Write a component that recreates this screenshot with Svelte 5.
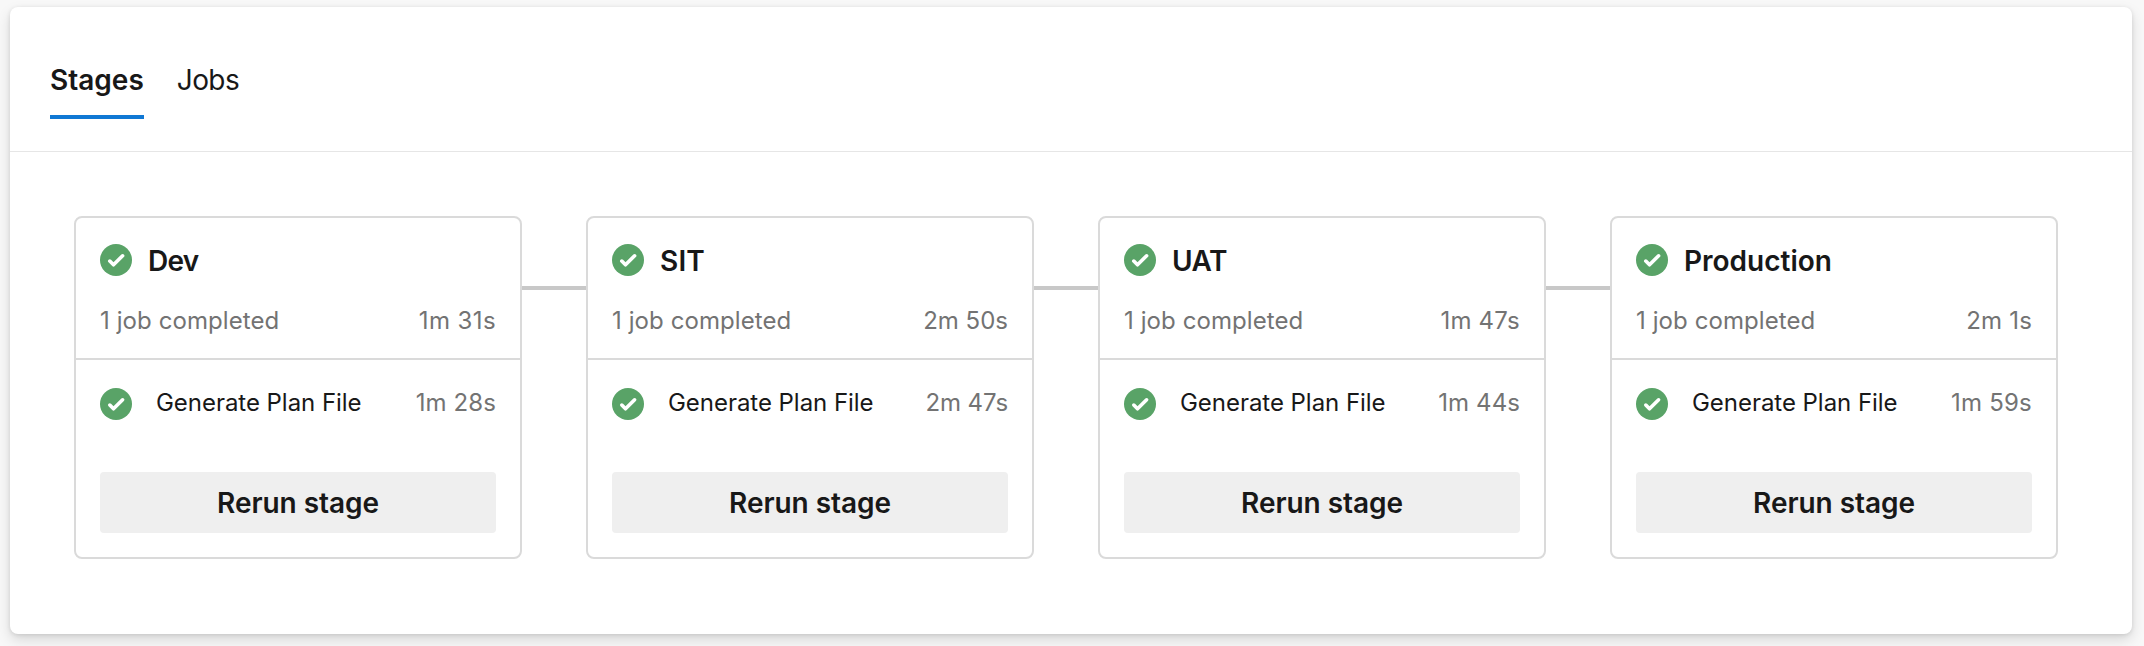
<script>
  const stages = [
    { name: 'Dev', total: '1m 31s', job: '1m 28s', nameTrack: -0.7, totalTrack: 0.4, jobTrack: 0.1 },
    { name: 'SIT', total: '2m 50s', job: '2m 47s', nameTrack: 0.2, totalTrack: 0, jobTrack: -0.1 },
    { name: 'UAT', total: '1m 47s', job: '1m 44s', nameTrack: -0.5, totalTrack: 0.2, jobTrack: 0.1 },
    { name: 'Production', total: '2m 1s', job: '1m 59s', nameTrack: 0, totalTrack: 0.2, jobTrack: 0.2 }
  ];
</script>

{#snippet check()}
  <svg class="check" viewBox="0 0 32 32" aria-hidden="true">
    <circle cx="16" cy="16" r="16" fill="#59a367" />
    <path d="M9.8 17.1 13.5 20.8 22.6 11.8" fill="none" stroke="#fff" stroke-width="3.6" stroke-linecap="round" stroke-linejoin="round" />
  </svg>
{/snippet}

<main class="page">
  <section class="panel">
    <nav class="tabs">
      <button class="tab active">Stages</button>
      <button class="tab">Jobs</button>
    </nav>
    <div class="stages">
      {#each stages as stage, i}
        {#if i > 0}<div class="connector"></div>{/if}
        <article class="card">
          <header>
            <div class="title">
              {@render check()}
              <h2 style="letter-spacing: {stage.nameTrack}px">{stage.name}</h2>
            </div>
            <div class="summary">
              <span class="count">1 job completed</span>
              <span style="letter-spacing: {stage.totalTrack}px">{stage.total}</span>
            </div>
          </header>
          <div class="job">
            {@render check()}
            <span class="job-name">Generate Plan File</span>
            <span class="time" style="letter-spacing: {stage.jobTrack}px">{stage.job}</span>
          </div>
          <button class="rerun">Rerun stage</button>
        </article>
      {/each}
    </div>
  </section>
</main>

<style>
  :global(body) {
    margin: 0;
    background: #f8f8f8;
  }
  .page {
    box-sizing: border-box;
    height: 646px;
    padding: 7px 12px 12px 10px;
    overflow: hidden;
    font-family: Inter, 'Liberation Sans', sans-serif;
    color: #181818;
  }
  .panel {
    box-sizing: border-box;
    height: 627px;
    border-radius: 8px;
    background: #fff;
    box-shadow: 0 6px 14px rgba(0, 0, 0, 0.13), 0 1px 4px rgba(0, 0, 0, 0.11);
  }
  button {
    border: 0;
    padding: 0;
    background: none;
    font: inherit;
    color: inherit;
  }
  .tabs {
    box-sizing: border-box;
    display: flex;
    align-items: flex-start;
    gap: 33px;
    height: 145px;
    padding: 42px 40px 0;
    border-bottom: 1px solid #e6e6e6;
  }
  .tab {
    box-sizing: border-box;
    height: 70px;
    padding-top: 2px;
    padding-bottom: 6px;
    border-bottom: 4px solid transparent;
    font-size: 28px;
    line-height: 58px;
    letter-spacing: -0.6px;
  }
  .tab.active {
    border-color: #1078d4;
    font-weight: 600;
    letter-spacing: 0;
  }
  .stages {
    display: flex;
    padding: 64px 64px 0;
  }
  .connector {
    width: 64px;
    height: 4px;
    margin-top: 70px;
    background: #c8c8c8;
  }
  .card {
    box-sizing: border-box;
    width: 448px;
    height: 343px;
    border: 2px solid #dadada;
    border-radius: 8px;
  }
  header {
    box-sizing: border-box;
    height: 142px;
    padding: 26px 24px 0;
    border-bottom: 2px solid #dadada;
  }
  .title {
    display: flex;
    align-items: flex-start;
    gap: 16px;
    height: 32px;
  }
  .check {
    display: block;
    flex: none;
    width: 32px;
    height: 32px;
  }
  h2 {
    margin: 1px 0 0;
    font-size: 28px;
    font-weight: 600;
    line-height: 32px;
  }
  .summary {
    display: flex;
    justify-content: space-between;
    margin-top: 29px;
    font-size: 24px;
    line-height: 31px;
    color: #737373;
  }
  .count {
    letter-spacing: 0.08px;
  }
  .job {
    display: flex;
    padding: 28px 24px 0;
    font-size: 24px;
    line-height: 29px;
  }
  .job-name {
    margin-left: 24px;
    letter-spacing: -0.04px;
  }
  .time {
    margin-left: auto;
    color: #737373;
  }
  .rerun {
    box-sizing: border-box;
    display: block;
    width: 396px;
    height: 61px;
    margin: 52px 24px 0;
    padding: 2px 0 1px;
    border-radius: 4px;
    background: #efefef;
    font-size: 28px;
    font-weight: 600;
    line-height: 58px;
    letter-spacing: -0.05px;
    text-align: center;
  }
</style>
